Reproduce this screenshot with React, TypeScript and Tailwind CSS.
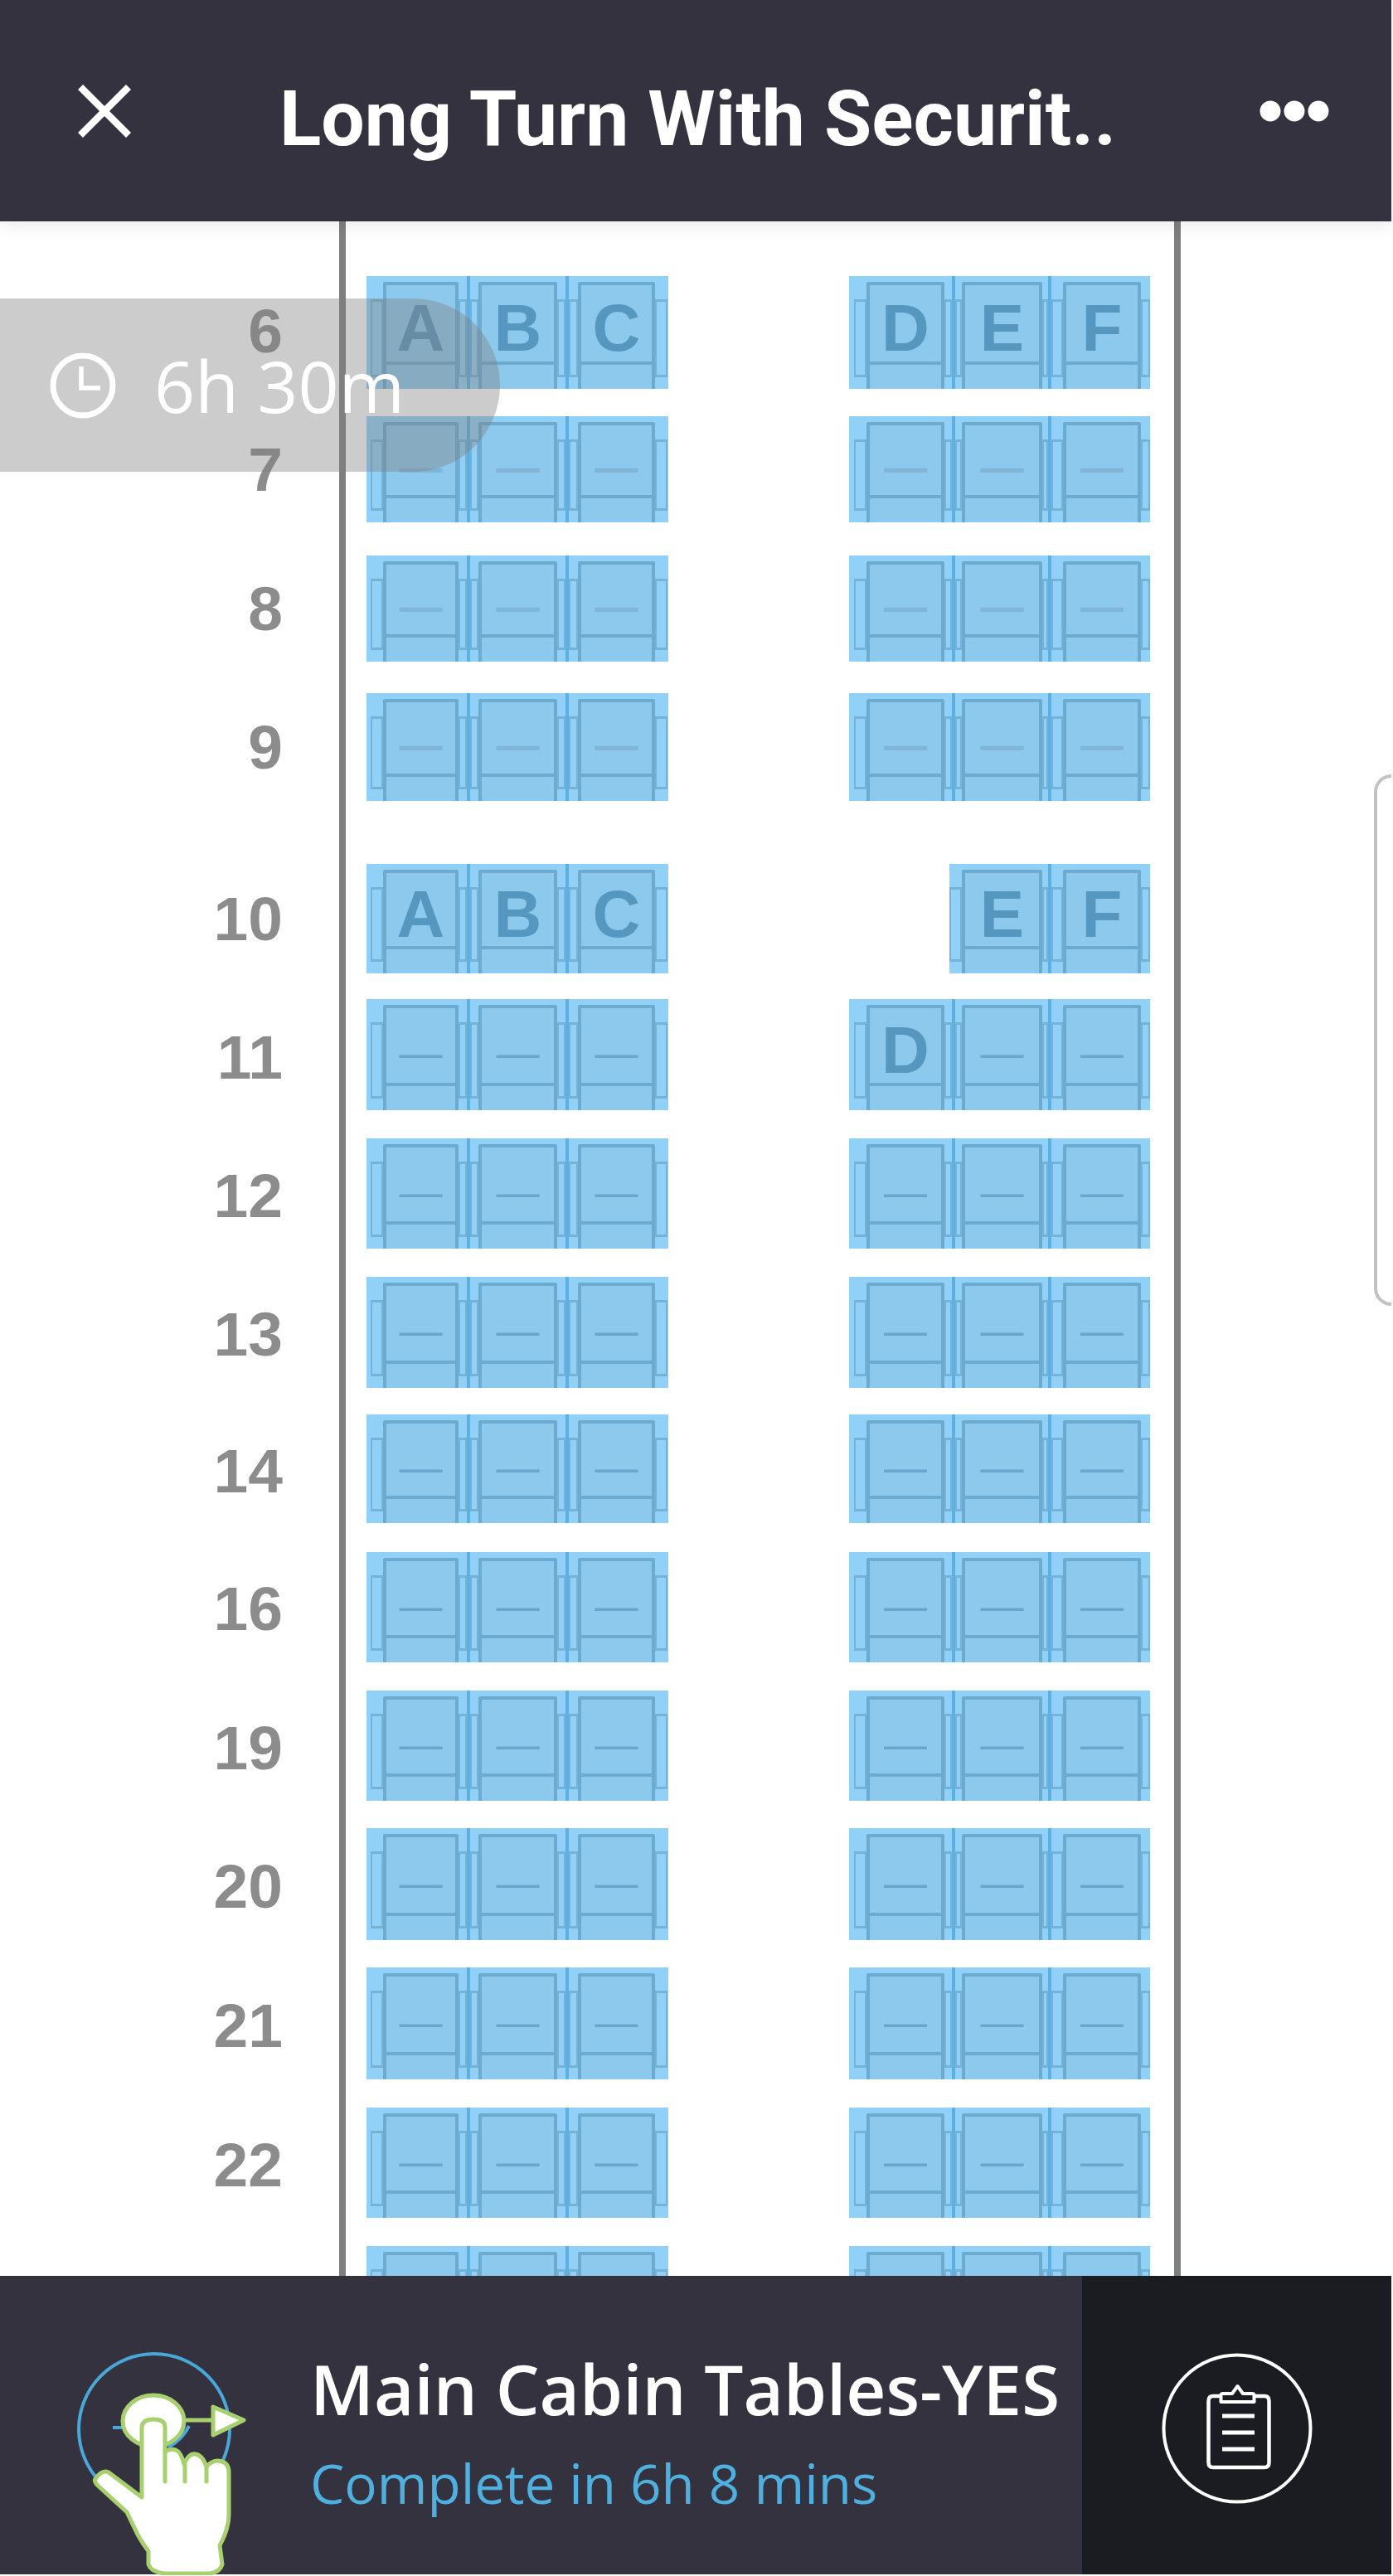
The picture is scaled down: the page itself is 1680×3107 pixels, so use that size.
const RIGHT_SEATS_NO_D = [
  { cell: 'w-[121px]', l: 'w-[15px]', r: 'w-[9px]' },
  { cell: 'w-[119px]', l: 'w-[15px]', r: 'w-[7px]' },
  { cell: 'w-[123px] border-l-[4px] border-[#5db0e2]', l: 'w-[14px]', r: 'w-[11px]' },
]

const ROWS = [
  { label: '6', pt: 'pt-[66px]', h: 'h-[136px]', num: 'pb-[4px]', left: ['A', 'B', 'C'], right: ['D', 'E', 'F'] },
  { label: '7', pt: 'pt-[33px]', h: 'h-[128px]', faint: true },
  { label: '8', pt: 'pt-[40px]', h: 'h-[128px]', faint: true },
  { label: '9', pt: 'pt-[38px]', h: 'h-[130px]', faint: true },
  { label: '10', pt: 'pt-[76px]', h: 'h-[132px]', left: ['A', 'B', 'C'], right: [null, 'E', 'F'], rightSeats: RIGHT_SEATS_NO_D },
  { label: '11', pt: 'pt-[31px]', h: 'h-[134px]', num: 'pt-[6px]', right: ['D', '—', '—'] },
  { label: '12', pt: 'pt-[34px]', h: 'h-[133px]', num: 'pt-[6px]' },
  { label: '13', pt: 'pt-[34px]', h: 'h-[134px]', num: 'pt-[4px]' },
  { label: '14', pt: 'pt-[32px]', h: 'h-[131px]', num: 'pt-[6px]' },
  { label: '16', pt: 'pt-[35px]', h: 'h-[133px]', num: 'pt-[4px]' },
  { label: '19', pt: 'pt-[34px]', h: 'h-[133px]', num: 'pt-[6px]' },
  { label: '20', pt: 'pt-[33px]', h: 'h-[135px]', num: 'pt-[6px]' },
  { label: '21', pt: 'pt-[33px]', h: 'h-[135px]', num: 'pt-[6px]' },
  { label: '22', pt: 'pt-[34px]', h: 'h-[133px]', num: 'pt-[6px]' },
  { label: '', pt: 'pt-[34px]', h: 'h-[133px]' },
]

const DASHES = ['—', '—', '—']

const LEFT_SEATS = [
  { cell: 'w-[121px] pl-[5px]', l: 'w-[15px]', r: 'w-[10px]' },
  { cell: 'w-[119px] border-l-[4px] border-[#5db0e2]', l: 'w-[10px]', r: 'w-[10px]' },
  { cell: 'w-[124px] border-l-[4px] border-[#5db0e2] pr-[1px]', l: 'w-[11px]', r: 'w-[15px]' },
]

const RIGHT_SEATS = [
  { cell: 'w-[124px] pl-[6px]', l: 'w-[15px]', r: 'w-[9px]' },
  { cell: 'w-[116px] border-l-[4px] border-[#5db0e2]', l: 'w-[8px]', r: 'w-[7px]' },
  { cell: 'w-[123px] border-l-[4px] border-[#5db0e2]', l: 'w-[14px]', r: 'w-[11px]' },
]

type SeatLayout = { cell: string; l: string; r: string }

function Arm({ width }: { width: string }) {
  return <div className={`${width} mt-[28px] mb-[14px] border-y-[3px] border-x-[2px] border-[#76b2d6] shrink-0`} />
}

function Seat({ layout, text, faint }: { layout: SeatLayout; text: string; faint?: boolean }) {
  const isDash = text === '—'
  const dashClass = faint
    ? 'relative top-[2px] text-[52px] font-bold text-[#7fb6d8]'
    : 'relative top-[2px] text-[52px] font-normal text-[#6aa6cb]'
  return (
    <div className={`${layout.cell} flex h-full bg-[#91d0f7]`}>
      <Arm width={layout.l} />
      <div className="flex-1 min-w-0 mt-[7px] flex flex-col bg-[#8cc9ed] border-x-[4px] border-t-[4px] border-[#6caad0] rounded-t-[3px]">
        <div className="flex-1 min-h-0 flex items-center justify-center pt-[12px] text-[80px] leading-none font-bold text-[#5597be]">
          <span className={isDash ? dashClass : ''}>{text}</span>
        </div>
        <div className="h-[33px] border-t-[4px] border-[#6caad0]" />
      </div>
      <Arm width={layout.r} />
    </div>
  )
}

function SeatBlock({ seats, letters, height, faint }: { seats: SeatLayout[]; letters: (string | null)[]; height: string; faint?: boolean }) {
  return (
    <div className={`flex ${height}`}>
      {seats.map((layout, i) =>
        letters[i] === null
          ? <div key={i} className={layout.cell} />
          : <Seat key={i} layout={layout} text={letters[i] as string} faint={faint} />
      )}
    </div>
  )
}

function CloseIcon() {
  return (
    <svg width="64" height="64" viewBox="0 0 64 64" className="shrink-0">
      <path d="M3 3 L61 61 M61 3 L3 61" stroke="#fff" strokeWidth="8.5" />
    </svg>
  )
}

function DotsIcon() {
  return (
    <svg width="84" height="26" viewBox="0 0 84 26" className="shrink-0">
      <ellipse cx="13" cy="13" rx="12.5" ry="12.5" fill="#fff" />
      <ellipse cx="42" cy="13" rx="12.5" ry="12.5" fill="#fff" />
      <ellipse cx="71" cy="13" rx="12.5" ry="12.5" fill="#fff" />
    </svg>
  )
}

function ClockIcon() {
  return (
    <svg width="80" height="80" viewBox="0 0 80 80" className="shrink-0">
      <circle cx="40" cy="40" r="36" fill="none" stroke="#fff" strokeWidth="7" />
      <path d="M38 17 V43 H61" fill="none" stroke="#fff" strokeWidth="5.5" />
    </svg>
  )
}

function HandIcon() {
  return (
    <svg width="210" height="276" viewBox="0 0 210 276" className="shrink-0">
      <circle cx="96" cy="100" r="91" fill="none" stroke="#4aa8d8" strokeWidth="4" />
      <path d="M46 98 H82" stroke="#4aa8d8" strokeWidth="4" />
      <path d="M138 96 Q130 112 113 122" fill="none" stroke="#4aa8d8" strokeWidth="4" />
      <path d="M132 89 H167" stroke="#a9d06f" strokeWidth="5" />
      <path d="M167 73 L204 89 L167 107 Z" fill="#fff" stroke="#a9d06f" strokeWidth="5" strokeLinejoin="round" />
      <ellipse cx="95" cy="90" rx="37" ry="31" fill="#fff" stroke="#a9d06f" strokeWidth="5" />
      <path
        d="M81 97 Q82 88 95 88 Q109 88 109 97 V127 Q115 123 122 125 Q128 127 132 142 Q138 128 146 130 Q154 131 159 145 Q165 138 173 138 Q185 139 186 150 V203 Q186 220 175 240 L178 263 Q175 273 162 274 H108 Q92 272 89 263 V247 Q82 238 76 227 L63 200 L27 167 Q23 162 25 160 Q33 148 41 152 L81 182 Z"
        fill="#fff"
        stroke="#a9d06f"
        strokeWidth="5"
        strokeLinejoin="round"
      />
      <path d="M109 127 V163 M133 142 V163 M159 145 V163" fill="none" stroke="#a9d06f" strokeWidth="5" strokeLinecap="round" />
    </svg>
  )
}

function ClipboardIcon() {
  return (
    <svg width="190" height="190" viewBox="0 0 190 190" className="shrink-0">
      <circle cx="95" cy="95" r="88.5" fill="none" stroke="#fff" strokeWidth="4" />
      <path
        d="M75 56 H66 Q60.5 56 60.5 62 V136 Q60.5 142 66 142 H128 Q133.5 142 133.5 136 V62 Q133.5 56 128 56 H116"
        fill="none"
        stroke="#fff"
        strokeWidth="4.5"
      />
      <path
        d="M75.5 63 V55 Q75.5 53 78 53 H89 L95.5 44 L102 53 H113 Q115.5 53 115.5 55 V63 Z"
        fill="none"
        stroke="#fff"
        strokeWidth="4"
        strokeLinejoin="round"
      />
      <path d="M77 80 H116 M77 100 H116 M77 120 H116" stroke="#fff" strokeWidth="5" />
    </svg>
  )
}

export default function App() {
  return (
    <div className="w-[1680px] h-[3107px] bg-white overflow-hidden font-['Liberation_Sans',sans-serif]">
      <div className="w-[1678px] h-[3105px] flex flex-col">

        {/* Header */}
        <header className="relative z-10 h-[267px] shrink-0 flex items-center bg-[#33323e] pl-[94px] pr-[75px] shadow-[0_6px_18px_rgba(0,0,0,0.08)]">
          <CloseIcon />
          <h1 className="flex-1 ml-[179px] pt-[20px] text-[93px] leading-none font-bold text-white whitespace-nowrap font-['Roboto',sans-serif]">
            Long Turn With Securit..
          </h1>
          <DotsIcon />
        </header>

        {/* Seat map */}
        <main className="relative flex-1 min-h-0 overflow-hidden">
          {ROWS.map(row => (
            <div key={row.pt + row.h + row.label} className="flex">
              <div className={`w-[409px] shrink-0 ${row.pt} pr-[68px]`}>
                <div className={`${row.h} ${row.num ?? ''} flex items-center justify-end text-[75px] leading-none font-bold text-[#8c8c8c]`}>
                  {row.label}
                </div>
              </div>
              <div className={`w-[1015px] shrink-0 border-x-[8px] border-[#7f7f7f] ${row.pt} pl-[25px] flex gap-[218px]`}>
                <SeatBlock seats={LEFT_SEATS} letters={row.left ?? DASHES} height={row.h} faint={row.faint} />
                <SeatBlock seats={row.rightSeats ?? RIGHT_SEATS} letters={row.right ?? DASHES} height={row.h} faint={row.faint} />
              </div>
            </div>
          ))}

          {/* Timer pill */}
          <div className="absolute left-0 top-[93px] w-[603px] h-[209px] flex items-center gap-[46px] pl-[60px] rounded-r-full bg-[#808080]/40">
            <ClockIcon />
            <span className="text-[86px] leading-none text-white font-['Open_Sans',sans-serif]">6h 30m</span>
          </div>

          {/* Edge handle */}
          <div className="absolute right-0 top-[667px] w-[21px] h-[641px] border-l-[4px] border-y-[4px] border-[#c2c2c2] rounded-l-[26px]" />
        </main>

        {/* Footer */}
        <footer className="h-[360px] shrink-0 flex bg-[#33323e] font-['Open_Sans',sans-serif]">
          <div className="flex-1 flex pl-[90px]">
            <div className="pt-[85px]">
              <HandIcon />
            </div>
            <div className="ml-[74px] pt-[80px]">
              <p className="text-[83.6px] leading-[112px] font-semibold text-white whitespace-nowrap">Main Cabin Tables-YES</p>
              <p className="mt-[15px] text-[65.6px] leading-[86px] text-[#4fb0e0] whitespace-nowrap">Complete in 6h 8 mins</p>
            </div>
          </div>
          <div className="w-[373px] shrink-0 flex items-center justify-center pt-[8px] bg-[#1b1c21]">
            <ClipboardIcon />
          </div>
        </footer>
      </div>
    </div>
  )
}
